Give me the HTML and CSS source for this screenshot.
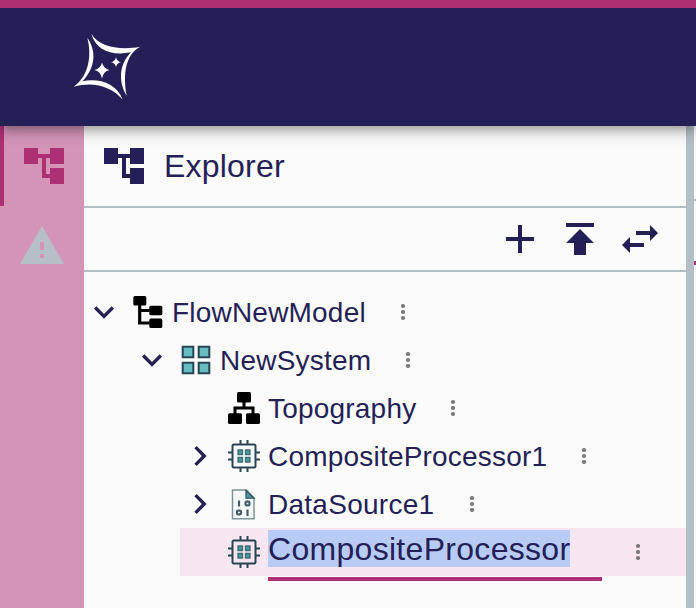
FILE: index.html
```html
<!DOCTYPE html>
<html lang="en">
<head>
<meta charset="utf-8">
<title>Explorer</title>
<link rel="stylesheet" href="styles.css">
</head>
<body>
<svg class="defs" width="0" height="0">
  <symbol id="account-tree" viewBox="0 0 24 24"><path d="M22 11V3h-7v3H9V3H2v8h7V8h2v10h4v3h7v-8h-7v3h-2V8h2v3z"/></symbol>
  <symbol id="down" viewBox="0 0 24 24"><path d="M16.59 8.59L12 13.17 7.41 8.59 6 10l6 6 6-6z"/></symbol>
  <symbol id="right" viewBox="0 0 24 24"><path d="M10 6L8.59 7.41 13.17 12l-4.58 4.59L10 18l6-6z"/></symbol>
  <symbol id="more" viewBox="0 0 24 24"><circle cx="12" cy="6" r="2.1"/><circle cx="12" cy="12" r="2.1"/><circle cx="12" cy="18" r="2.1"/></symbol>
  <symbol id="chip" viewBox="0 0 32 32">
    <path d="M12.5 0v4M19.5 0v4M12.5 28v4M19.5 28v4M0 12.5h4M0 19.5h4M28 12.5h4M28 19.5h4" stroke="#264653" stroke-width="2"/>
    <rect x="4.5" y="4.5" width="23" height="23" rx="1.5" fill="none" stroke="#264653" stroke-width="2"/>
    <path d="M10 10h4.500v4.500H10zM17.500 10H22v4.500h-4.500zM10 17.500h4.500V22H10zM17.500 17.500H22V22h-4.500z" fill="#479a9f" stroke="#3c6b76" stroke-width="1.3"/>
  </symbol>
</svg>
<header class="navbar">
  <svg class="logo" viewBox="0 0 66 66" width="66" height="66">
    <path d="M17.300 -.3C25 13 46 16.500 66.300 12.700C52 20 48.500 39 52.700 62C44.500 48 44.500 31 57 18.300C38 22 22 16.500 17.300 -.3Z"/>
    <path d="M13.300 3.700C21.500 15 23 32 8.500 47.300C24 44 42 48.500 48.700 65.500C37 52 19 47 -.3 52.700C13.500 43 18.500 24 13.300 3.700Z"/>
    <path d="M28 28.500Q29.300 34.700 35.500 36Q29.300 37.300 28 44.500Q26.700 37.300 20.500 36Q26.700 34.700 28 28.500ZM42 23.300Q42.900 27.500 47 28.300Q42.900 29.100 42 33Q41.100 29.100 37 28.300Q41.100 27.500 42 23.300Z"/>
  </svg>
</header>
<div class="workbench">
  <nav class="sidebar">
    <div class="tab active"><svg width="48" height="48"><use href="#account-tree"/></svg></div>
    <div class="tab"><svg width="48" height="48" viewBox="0 0 24 24"><path d="M1 21h22L12 2 1 21zm12-3h-2v-2h2v2zm0-4h-2v-4h2v4z"/></svg></div>
  </nav>
  <section class="panel">
    <div class="panel-title"><svg width="48" height="48"><use href="#account-tree"/></svg><h1>Explorer</h1></div>
    <div class="toolbar">
      <svg width="48" height="48" viewBox="0 0 24 24"><path d="M19 13h-6v6h-2v-6H5v-2h6V5h2v6h6v2z"/></svg>
      <svg width="48" height="48" viewBox="0 0 24 24"><path d="M5 4v2h14V4H5zm0 10h4v6h6v-6h4l-7-7-7 7z"/></svg>
      <svg width="48" height="48" viewBox="0 0 24 24"><path d="M6.990 11L3 15l3.990 4v-3H14v-2H6.990v-3zM21 9l-3.990-4v3H10v2h7.010v3L21 9z"/></svg>
    </div>
    <ul class="tree">
      <li class="row">
        <svg class="toggle"><use href="#down"/></svg>
        <svg class="kind" viewBox="0 0 32 32"><path d="M7.700 9v18h10M7.700 14.500h10" fill="none" stroke="#000" stroke-width="3.200"/><rect x="1.300" y="0" width="13" height="9.500" rx="1.500"/><rect x="17.300" y="9.700" width="13" height="9.500" rx="1.500"/><rect x="17.300" y="22.400" width="13" height="9.500" rx="1.500"/></svg>
        <span class="label">FlowNewModel</span><svg class="more"><use href="#more"/></svg>
      </li>
      <li><ul>
        <li class="row">
          <svg class="toggle"><use href="#down"/></svg>
          <svg class="kind" viewBox="0 0 32 32"><path d="M2.700 2.700h10.600v10.600H2.700zM18.700 2.700h10.600v10.600H18.700zM2.700 18.700h10.600v10.600H2.700zM18.700 18.700h10.600v10.600H18.700z" fill="#66bcc0" stroke="#264653" stroke-width="2"/></svg>
          <span class="label">NewSystem</span><svg class="more"><use href="#more"/></svg>
        </li>
        <li><ul>
          <li class="row">
            <span class="toggle"></span>
            <svg class="kind" viewBox="0 0 32 32"><path d="M16 9v7M7 22v-6h18v6" fill="none" stroke="#000" stroke-width="3"/><rect x="9" y="0" width="14" height="10.500" rx="1.500"/><rect x="0" y="21.300" width="14" height="10.700" rx="1.500"/><rect x="18" y="21.300" width="14" height="10.700" rx="1.500"/></svg>
            <span class="label">Topography</span><svg class="more"><use href="#more"/></svg>
          </li>
          <li class="row">
            <svg class="toggle"><use href="#right"/></svg>
            <svg class="kind"><use href="#chip"/></svg>
            <span class="label">CompositeProcessor1</span><svg class="more"><use href="#more"/></svg>
          </li>
          <li class="row">
            <svg class="toggle"><use href="#right"/></svg>
            <svg class="kind" viewBox="0 0 32 32"><path d="M4.500 2h14l7.500 8v20.700h-21.500z" fill="#f6f9f9" stroke="#7d929a" stroke-width="1.500"/><path d="M18 2.500v7.700h8z" fill="#479a9f" stroke="#355a66" stroke-width="1.300"/><g fill="none" stroke="#465e68" stroke-width="2.200"><path d="M11 12.500v6M19.500 21.500v6.500"/><rect x="17.500" y="13.700" width="4" height="3.600" rx="1"/><rect x="9" y="22.700" width="4" height="3.600" rx="1"/></g></svg>
            <span class="label tight">DataSource1</span><svg class="more"><use href="#more"/></svg>
          </li>
          <li class="row selected">
            <span class="toggle"></span>
            <svg class="kind"><use href="#chip"/></svg>
            <span class="editor"><span class="selection">CompositeProcessor</span></span><svg class="more"><use href="#more"/></svg>
          </li>
        </ul></li>
      </ul></li>
    </ul>
  </section>
  <div class="splitter"></div>
  <div class="main-area"><div class="main-title"></div><div class="main-tab"></div></div>
</div>
</body>
</html>
```
FILE: styles.css
```css
* { box-sizing: border-box; }
body {
  margin: 0;
  height: 608px;
  overflow: hidden;
  display: flex;
  flex-direction: column;
  background: #fafafa;
  color: #241f56;
  font-family: "Liberation Sans", Arial, sans-serif;
  letter-spacing: 0.0128em;
}
svg { display: block; flex: none; fill: currentColor; }
.defs { position: absolute; }
ul { list-style: none; margin: 0; padding: 0; }
.navbar {
  position: relative;
  z-index: 1;
  flex: none;
  height: 126px;
  padding: 26px 74px;
  background: #241f56;
  border-top: 8px solid #ad3075;
  box-shadow: 0 4px 8px -2px rgba(0,0,0,.2), 0 8px 10px rgba(0,0,0,.14), 0 2px 20px rgba(0,0,0,.12);
}
.logo { color: #fff; overflow: visible; }
.workbench { flex: 1; display: flex; }
.sidebar { width: 84px; background: #d494b7; color: #b5bfc5; }
.tab { height: 80px; display: flex; align-items: center; justify-content: center; }
.active { border-left: 4px solid #ad3075; color: #ad3075; }
.panel { width: 602px; }
.panel-title {
  height: 82px;
  padding-left: 16px;
  display: flex;
  align-items: center;
  gap: 16px;
  border-bottom: 2px solid #b3bfc3;
}
h1 { margin: 0; font-size: 32px; font-weight: 400; line-height: 48px; }
.toolbar {
  height: 64px;
  padding-right: 22px;
  display: flex;
  align-items: center;
  justify-content: flex-end;
  gap: 12px;
  border-bottom: 2px solid #b3bfc3;
}
.tree { padding-top: 16px; }
.tree ul { padding-left: 48px; }
.row { height: 48px; display: flex; align-items: center; }
.toggle { width: 40px; height: 40px; }
.kind { width: 32px; height: 32px; margin: 0 8px; color: #000; }
.label { padding-top: 2px; font-size: 28px; line-height: 42px; }
.tight { letter-spacing: 0.0094em; padding-right: 1px; }
.more { width: 24px; height: 24px; margin-left: 25px; color: #757575; }
.selected { background: #f7e5ef; }
.selected .more { margin-left: 24px; }
.editor {
  width: 334px;
  height: 53px;
  align-self: flex-start;
  padding-top: 2px;
  border-bottom: 4px solid #ad3075;
  font-size: 32px;
  letter-spacing: 0.0094em;
}
.selection { display: inline-block; width: 302px; height: 37px; line-height: 39px; background: #b7cbf5; }
.splitter { width: 8px; background: #b4bfc5; }
.main-area { flex: 1; }
.main-title { height: 75px; border-bottom: 2px solid #b3bfc1; }
.main-tab { height: 64px; border-bottom: 4px solid #ad3075; }
```
